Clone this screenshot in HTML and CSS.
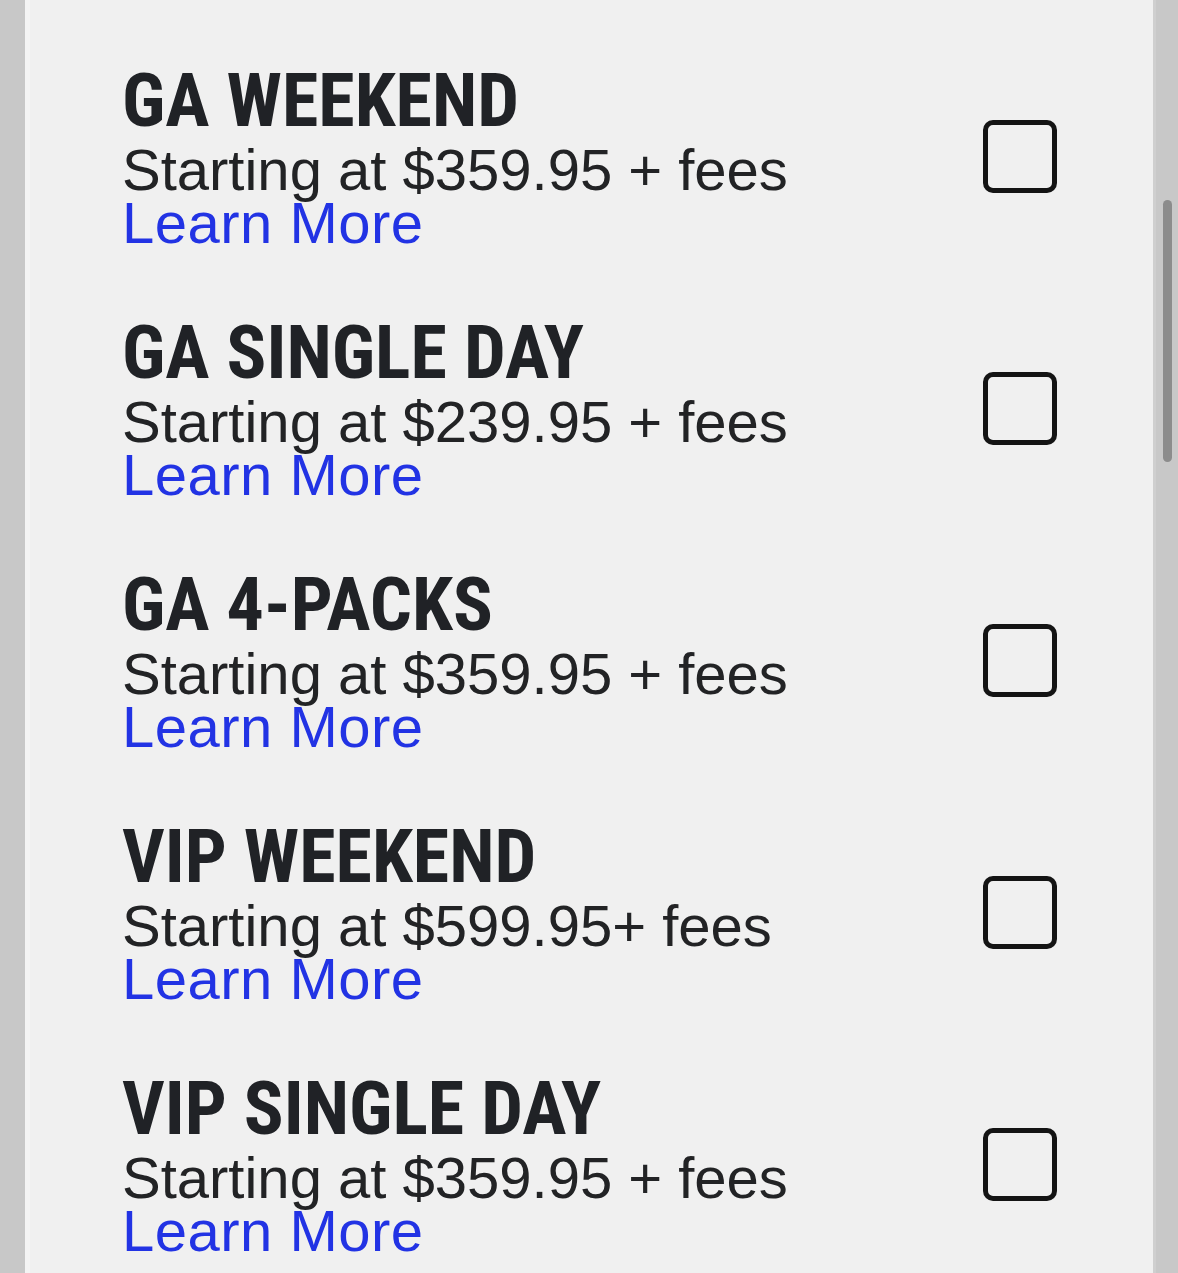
FILE: index.html
```html
<!DOCTYPE html>
<html lang="en">
<head>
<meta charset="utf-8">
<title>Tickets</title>
<link rel="stylesheet" href="styles.css">
</head>
<body>
<div class="frame">
  <div class="gutter gutter-left"></div>
  <main class="panel">
    <div class="ticket">
      <div class="info">
        <h2 class="title">GA WEEKEND</h2>
        <p class="price">Starting at $359.95 + fees</p>
        <a class="more" href="#">Learn More</a>
      </div>
      <span class="check"></span>
    </div>
    <div class="ticket">
      <div class="info">
        <h2 class="title">GA SINGLE DAY</h2>
        <p class="price">Starting at $239.95 + fees</p>
        <a class="more" href="#">Learn More</a>
      </div>
      <span class="check"></span>
    </div>
    <div class="ticket">
      <div class="info">
        <h2 class="title">GA 4-PACKS</h2>
        <p class="price">Starting at $359.95 + fees</p>
        <a class="more" href="#">Learn More</a>
      </div>
      <span class="check"></span>
    </div>
    <div class="ticket">
      <div class="info">
        <h2 class="title">VIP WEEKEND</h2>
        <p class="price">Starting at $599.95+ fees</p>
        <a class="more" href="#">Learn More</a>
      </div>
      <span class="check"></span>
    </div>
    <div class="ticket">
      <div class="info">
        <h2 class="title">VIP SINGLE DAY</h2>
        <p class="price">Starting at $359.95 + fees</p>
        <a class="more" href="#">Learn More</a>
      </div>
      <span class="check"></span>
    </div>
  </main>
  <div class="gutter gutter-right"><div class="thumb"></div></div>
</div>
</body>
</html>
```
FILE: styles.css
```css
html, body {
  margin: 0;
  padding: 0;
  height: 100%;
  overflow: hidden;
  background: #c8c8c8;
}
.frame {
  display: flex;
  height: 1273px;
}
.gutter {
  width: 25px;
  flex: none;
  background: #c8c8c8;
}
.gutter-right {
  display: flex;
  justify-content: center;
  border-left: 3px solid #cfcfcf;
  box-sizing: border-box;
  padding-left: 1px;
}
.thumb {
  width: 9px;
  height: 262px;
  margin-top: 200px;
  border-radius: 5px;
  background: #8c8c8c;
}
.panel {
  flex: 1;
  background: #f0f0f0;
  border-left: 5px solid #f4f4f4;
  padding: 58px 96px 0 92px;
  overflow: hidden;
}
.ticket {
  display: flex;
  align-items: center;
  justify-content: space-between;
  margin-bottom: 61px;
}
.info {
  display: flex;
  flex-direction: column;
  align-items: flex-start;
}
.title {
  margin: 0;
  font-family: "Roboto Condensed", "DejaVu Sans Condensed", "Liberation Sans", sans-serif;
  font-weight: 700;
  font-size: 74px;
  line-height: 85px;
  color: #202226;
  white-space: nowrap;
}
.price {
  margin: 0;
  font-family: "Liberation Sans", Arial, sans-serif;
  font-size: 58px;
  line-height: 53px;
  color: #222325;
}
.more {
  font-family: "Liberation Sans", Arial, sans-serif;
  font-size: 58px;
  line-height: 53px;
  letter-spacing: 0.5px;
  color: #2233e4;
  text-decoration: none;
}
.check {
  width: 64px;
  height: 63px;
  border: 5px solid #141414;
  border-radius: 10px;
  margin-top: 6px;
  flex: none;
}
```
